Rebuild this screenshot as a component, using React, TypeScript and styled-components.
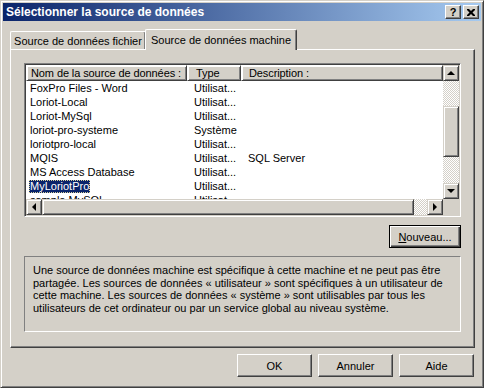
import React from 'react'
import styled, { createGlobalStyle, css } from 'styled-components'

type Source = {
  name: string
  type: string
  desc?: string
  selected?: boolean
}

const sources: Source[] = [
  { name: 'FoxPro Files - Word', type: 'Utilisat...' },
  { name: 'Loriot-Local', type: 'Utilisat...' },
  { name: 'Loriot-MySql', type: 'Utilisat...' },
  { name: 'loriot-pro-systeme', type: 'Système' },
  { name: 'loriotpro-local', type: 'Utilisat...' },
  { name: 'MQIS', type: 'Utilisat...', desc: 'SQL Server' },
  { name: 'MS Access Database', type: 'Utilisat...' },
  { name: 'MyLoriotPro', type: 'Utilisat...', selected: true },
  { name: 'sample MySQL', type: 'Utilisat...' },
]

const App = () => {
  return (
    <>
      <GlobalStyle />
      <Window>
        <TitleBar>
          <Title>Sélectionner la source de données</Title>
          <CaptionButton>?</CaptionButton>
          <CaptionButton $gap>
            <svg width="8" height="7" viewBox="0 0 8 7">
              <path d="M0 0h2l2 2 2-2h2v1l-2.5 2.5L8 6v1H6L4 5 2 7H0V6l2.5-2.5L0 1z" fill="#000" />
            </svg>
          </CaptionButton>
        </TitleBar>

        <Body>
          <TabStrip>
            <Tab $width={136}>Source de données fichier</Tab>
            <Tab $width={152} $active>
              Source de données machine
            </Tab>
          </TabStrip>

          <Panel>
            <ListView>
              <ListMain>
                <HeaderRow>
                  <HeaderCell $pad={4}>Nom de la source de données :</HeaderCell>
                  <HeaderCell $pad={8}>Type</HeaderCell>
                  <HeaderCell $pad={7}>Description :</HeaderCell>
                </HeaderRow>
                {sources.map((s) => (
                  <Row key={s.name}>
                    <NameCell>
                      <ItemLabel $selected={s.selected}>{s.name}</ItemLabel>
                    </NameCell>
                    <Cell $pad={7}>{s.type}</Cell>
                    <Cell $pad={7}>{s.desc}</Cell>
                  </Row>
                ))}
              </ListMain>

              <VScroll>
                <ArrowButton>
                  <Triangle $dir="up" />
                </ArrowButton>
                <Track $vertical>
                  <Thumb $offset={25} $size={51} $vertical />
                </Track>
                <ArrowButton>
                  <Triangle $dir="down" />
                </ArrowButton>
              </VScroll>

              <HScroll>
                <ArrowButton>
                  <Triangle $dir="left" />
                </ArrowButton>
                <Track>
                  <Thumb $offset={0} $size={372} />
                </Track>
                <ArrowButton>
                  <Triangle $dir="right" />
                </ArrowButton>
              </HScroll>
              <Corner />
            </ListView>

            <NewRow>
              <DefaultButton>
                <u>N</u>ouveau...
              </DefaultButton>
            </NewRow>

            <InfoBox>
              Une source de données machine est spécifique à cette machine et ne peut pas être
              <br />
              partagée. Les sources de données « utilisateur » sont spécifiques à un utilisateur de
              <br />
              cette machine. Les sources de données « système » sont utilisables par tous les
              <br />
              utilisateurs de cet ordinateur ou par un service global au niveau système.
            </InfoBox>
          </Panel>

          <ButtonRow>
            <PushButton>OK</PushButton>
            <PushButton>Annuler</PushButton>
            <PushButton>Aide</PushButton>
          </ButtonRow>
        </Body>
      </Window>
    </>
  )
}

export default App

const GlobalStyle = createGlobalStyle`
  html, body {
    margin: 0;
    padding: 0;
    background: #d4d0c8;
  }
`

const raised = css`
  background: #d4d0c8;
  border: 1px solid;
  border-color: #fff #404040 #404040 #fff;
  box-shadow: inset -1px -1px #808080;
  box-sizing: border-box;
`

const scrollRaised = css`
  background: #d4d0c8;
  border: 1px solid;
  border-color: #d4d0c8 #404040 #404040 #d4d0c8;
  box-shadow: inset 1px 1px #fff, inset -1px -1px #808080;
  box-sizing: border-box;
`

const Window = styled.div`
  width: 484px;
  height: 388px;
  box-sizing: border-box;
  display: flex;
  flex-direction: column;
  background: #d4d0c8;
  border: 1px solid;
  border-color: #d4d0c8 #404040 #404040 #d4d0c8;
  box-shadow: inset 1px 1px #fff, inset -1px -1px #808080;
  padding: 2px;
  font-family: 'Liberation Sans', Arial, sans-serif;
  font-size: 11px;
  color: #000;
`

const TitleBar = styled.div`
  height: 18px;
  display: flex;
  align-items: center;
  padding: 0 2px 0 3px;
  background: linear-gradient(to right, #0a246a, #a6caf0);
`

const Title = styled.div`
  flex: 1;
  color: #fff;
  font-weight: bold;
  font-size: 12px;
  white-space: nowrap;
`

const CaptionButton = styled.div<{ $gap?: boolean }>`
  ${raised};
  width: 16px;
  height: 14px;
  margin-left: ${({ $gap }) => ($gap ? '2px' : '0')};
  display: flex;
  align-items: center;
  justify-content: center;
  font-weight: bold;
  font-size: 11px;
  line-height: 1;
`

const Body = styled.div`
  flex: 1;
  display: flex;
  flex-direction: column;
  padding: 8px 6px 8px 7px;
`

const TabStrip = styled.div`
  height: 20px;
  display: flex;
  align-items: flex-end;
  position: relative;
  z-index: 1;
`

const Tab = styled.div<{ $width: number; $active?: boolean }>`
  width: ${({ $width }) => $width}px;
  height: ${({ $active }) => ($active ? 21 : 18)}px;
  margin-left: ${({ $active }) => ($active ? -1 : 0)}px;
  margin-bottom: ${({ $active }) => ($active ? -1 : 0)}px;
  padding-top: ${({ $active }) => ($active ? 0 : 1)}px;
  box-sizing: border-box;
  display: flex;
  align-items: center;
  justify-content: center;
  background: #d4d0c8;
  border-top: 1px solid #fff;
  border-left: 1px solid #fff;
  border-right: 1px solid #404040;
  border-radius: 2px 2px 0 0;
  box-shadow: inset -1px 0 #808080;
  white-space: nowrap;
  position: relative;
  z-index: ${({ $active }) => ($active ? 2 : 1)};
`

const Panel = styled.div`
  flex: 1;
  display: flex;
  flex-direction: column;
  box-sizing: border-box;
  border: 1px solid;
  border-color: #fff #404040 #404040 #fff;
  box-shadow: inset -1px -1px #808080;
  padding: 13px 13px 0 13px;
`

const ListView = styled.div`
  height: 154px;
  box-sizing: border-box;
  display: grid;
  grid-template-columns: 1fr 16px;
  grid-template-rows: 1fr 16px;
  background: #fff;
  border: 1px solid;
  border-color: #808080 #fff #fff #808080;
  box-shadow: inset 1px 1px #404040, inset -1px -1px #d4d0c8;
  padding: 1px;
`

const ListMain = styled.div`
  overflow: hidden;
  min-height: 0;
  background: #fff;
`

const columns = css`
  display: grid;
  grid-template-columns: 161px 54px 1fr;
`

const HeaderRow = styled.div`
  ${columns};
  height: 16px;
`

const HeaderCell = styled.div<{ $pad?: number }>`
  ${scrollRaised};
  border-color: #fff #404040 #404040 #fff;
  height: 16px;
  padding-left: ${({ $pad }) => $pad ?? 5}px;
  display: flex;
  align-items: center;
  white-space: nowrap;
  overflow: hidden;
  letter-spacing: -0.1px;
`

const Row = styled.div`
  ${columns};
  height: 14px;
  align-items: center;
`

const Cell = styled.div<{ $pad?: number }>`
  padding-left: ${({ $pad }) => $pad ?? 4}px;
  white-space: nowrap;
  overflow: hidden;
`

const NameCell = styled.div`
  padding-left: 3px;
  white-space: nowrap;
  display: flex;
`

const ItemLabel = styled.span<{ $selected?: boolean }>`
  padding: 0 1px;
  line-height: 13px;
  ${({ $selected }) =>
    $selected &&
    css`
      background: #0a246a;
      color: #fff;
      outline: 1px dotted #d8cf9a;
      outline-offset: -1px;
    `}
`

const VScroll = styled.div`
  display: flex;
  flex-direction: column;
`

const HScroll = styled.div`
  display: flex;
`

const Corner = styled.div`
  background: #d4d0c8;
`

const ArrowButton = styled.div`
  ${scrollRaised};
  width: 16px;
  height: 16px;
  flex: none;
  display: flex;
  align-items: center;
  justify-content: center;
`

const Triangle = styled.span<{ $dir: 'up' | 'down' | 'left' | 'right' }>`
  width: 0;
  height: 0;
  ${({ $dir }) => {
    switch ($dir) {
      case 'up':
        return css`
          border-left: 4px solid transparent;
          border-right: 4px solid transparent;
          border-bottom: 4px solid #000;
        `
      case 'down':
        return css`
          border-left: 4px solid transparent;
          border-right: 4px solid transparent;
          border-top: 4px solid #000;
        `
      case 'left':
        return css`
          border-top: 4px solid transparent;
          border-bottom: 4px solid transparent;
          border-right: 4px solid #000;
        `
      default:
        return css`
          border-top: 4px solid transparent;
          border-bottom: 4px solid transparent;
          border-left: 4px solid #000;
        `
    }
  }}
`

const Track = styled.div<{ $vertical?: boolean }>`
  flex: 1;
  display: flex;
  flex-direction: ${({ $vertical }) => ($vertical ? 'column' : 'row')};
  background: repeating-conic-gradient(#fff 0 25%, #d4d0c8 0 50%) 0 0 / 2px 2px;
`

const Thumb = styled.div<{ $offset: number; $size: number; $vertical?: boolean }>`
  ${scrollRaised};
  flex: none;
  ${({ $vertical, $offset, $size }) =>
    $vertical
      ? css`
          margin-top: ${$offset}px;
          height: ${$size}px;
        `
      : css`
          margin-left: ${$offset}px;
          width: ${$size}px;
        `}
`

const NewRow = styled.div`
  display: flex;
  justify-content: flex-end;
  margin-top: 8px;
`

const DefaultButton = styled.div`
  width: 72px;
  height: 23px;
  box-sizing: border-box;
  border: 1px solid #000;
  background: #d4d0c8;
  box-shadow: inset 1px 1px #fff, inset -1px -1px #404040, inset -2px -2px #808080;
  display: flex;
  align-items: center;
  justify-content: center;
`

const InfoBox = styled.div`
  margin-top: 8px;
  height: 76px;
  box-sizing: border-box;
  border: 1px solid;
  border-color: #808080 #fff #fff #808080;
  padding: 7px 0 0 8px;
  line-height: 12.7px;
  white-space: nowrap;
`

const ButtonRow = styled.div`
  display: flex;
  justify-content: flex-end;
  gap: 6px;
  margin-top: 6px;
  padding-right: 1px;
`

const PushButton = styled.div`
  ${raised};
  width: 75px;
  height: 23px;
  display: flex;
  align-items: center;
  justify-content: center;
`
